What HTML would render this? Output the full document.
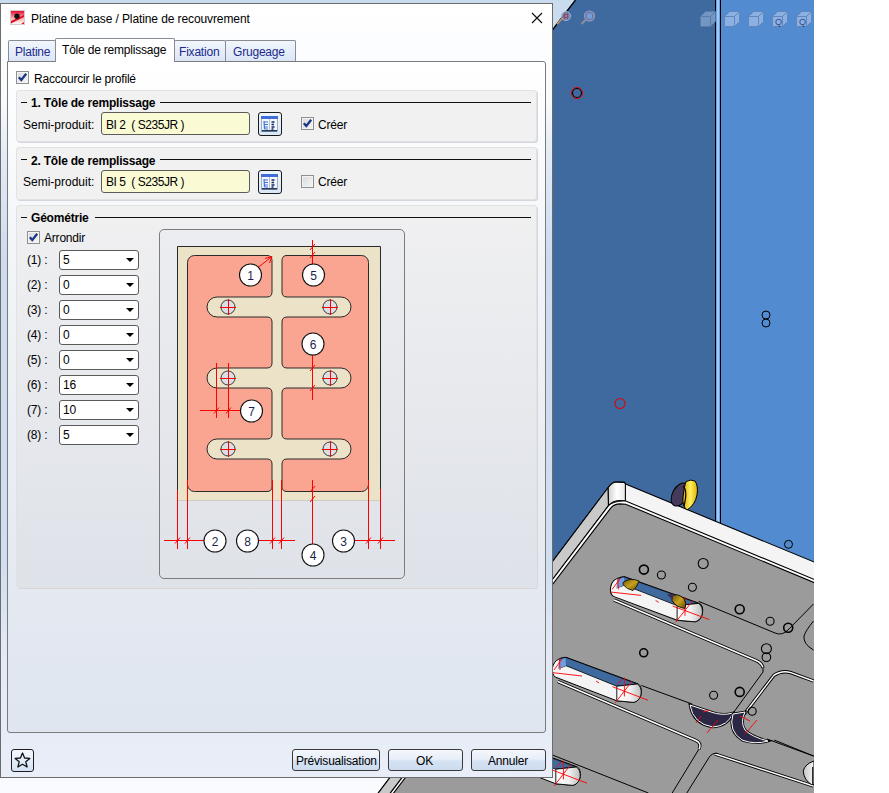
<!DOCTYPE html>
<html><head><meta charset="utf-8">
<style>
html,body{margin:0;padding:0;width:889px;height:793px;overflow:hidden;background:#fff;}
body{position:relative;font-family:"Liberation Sans",sans-serif;font-size:12px;color:#000;}
.a{position:absolute;}
.t{position:absolute;white-space:pre;line-height:14px;font-size:12px;letter-spacing:-0.2px;}
.b{font-weight:bold;}
svg.a{overflow:visible;}
.tab{position:absolute;box-sizing:border-box;border:1px solid #898c95;border-bottom:none;border-radius:2px 2px 0 0;background:linear-gradient(#f2f6fc,#dbe6f7);}
.grp{position:absolute;left:16px;width:521px;box-sizing:border-box;border:1px solid #e2e2e4;border-radius:3px;background:#f1f1f2;box-shadow:1px 1px 0 #d4d6dc;}
.cb{position:absolute;width:13px;height:13px;box-sizing:border-box;border:1px solid #8e8f8f;background:linear-gradient(135deg,#d8d9db,#f7f7f7);box-shadow:inset 0 0 0 1px #f4f4f4;}
.inp{position:absolute;left:101px;width:149px;height:23px;box-sizing:border-box;border:1px solid #5b5b5b;border-radius:3px;background:#fafad5;}
.ibtn{position:absolute;left:258px;width:24px;height:24px;box-sizing:border-box;border:1.5px solid #1a1a1a;border-radius:3px;background:linear-gradient(#eef6fd,#d9e8f6);}
.dd{position:absolute;left:59px;width:80px;height:20px;box-sizing:border-box;border:1px solid #5a5a5a;border-radius:3px;background:#fff;}
.dd i{position:absolute;left:66px;top:7px;width:0;height:0;border-left:4px solid transparent;border-right:4px solid transparent;border-top:4.5px solid #000;}
.btn{position:absolute;top:749px;height:22px;box-sizing:border-box;border:1px solid #3a3a3a;border-radius:3px;background:linear-gradient(#f4f7fc 0%,#e8eff9 45%,#d5e2f3 55%,#cddcf0 100%);}
.ttl{position:absolute;height:1px;background:#111;}
</style></head>
<body>
<svg class="a" style="left:0;top:0" width="889" height="793" viewBox="0 0 889 793">
<!--SCENE-->
<defs>
<linearGradient id="bg" x1="0" y1="0" x2="0" y2="1"><stop offset="0" stop-color="#c9dbee"/><stop offset="0.6" stop-color="#eef3fa"/><stop offset="1" stop-color="#fafbfe"/></linearGradient>
<linearGradient id="corner" x1="0" y1="0" x2="1" y2="0"><stop offset="0" stop-color="#d0d0d0"/><stop offset="0.5" stop-color="#ffffff"/><stop offset="1" stop-color="#e8e8e8"/></linearGradient>
<linearGradient id="cap" x1="0" y1="0" x2="1" y2="0"><stop offset="0" stop-color="#ffffff"/><stop offset="0.55" stop-color="#f0f0f0"/><stop offset="1" stop-color="#bdbdbd"/></linearGradient>
<linearGradient id="cap4" x1="0" y1="0" x2="1" y2="0"><stop offset="0" stop-color="#c8c8c8"/><stop offset="1" stop-color="#f4f4f4"/></linearGradient>
<linearGradient id="gold" x1="0" y1="0" x2="1" y2="1"><stop offset="0" stop-color="#6b5410"/><stop offset="0.5" stop-color="#c9a21c"/><stop offset="1" stop-color="#5a4408"/></linearGradient>
<linearGradient id="yel" x1="0" y1="0" x2="1" y2="0"><stop offset="0" stop-color="#d9a800"/><stop offset="0.5" stop-color="#fff060"/><stop offset="1" stop-color="#e0b000"/></linearGradient>
<linearGradient id="wl" x1="0" y1="0" x2="1" y2="0"><stop offset="0" stop-color="#5c8fd6"/><stop offset="0.5" stop-color="#b4dcff"/><stop offset="1" stop-color="#5c8fd6"/></linearGradient>
</defs>
<rect x="0" y="0" width="814" height="793" fill="url(#bg)"/>
<polygon points="500,98 575,0 715,0 715,700 500,700" fill="#3f6a9f"/>
<line x1="552" y1="30.5" x2="575.5" y2="0" stroke="#000" stroke-width="1.3"/>
<rect x="715" y="0" width="6" height="600" fill="#000"/>
<rect x="716" y="0" width="4" height="600" fill="url(#wl)"/>
<rect x="721" y="0" width="93" height="600" fill="#528bcf"/>
<circle cx="577" cy="93" r="4.5" fill="none" stroke="#000" stroke-width="1.2"/><circle cx="577" cy="93" r="5.6" fill="none" stroke="#e00000" stroke-width="0.9"/>
<circle cx="620" cy="403.5" r="5" fill="none" stroke="#e00000" stroke-width="1.1"/>
<circle cx="766" cy="315" r="4" fill="none" stroke="#000" stroke-width="1"/><circle cx="766" cy="323" r="4" fill="none" stroke="#000" stroke-width="1"/>
<circle cx="788.5" cy="544.3" r="4" fill="none" stroke="#000" stroke-width="1"/>
<g opacity="0.9"><path d="M700.5,16.5 L705.5,11.5 H715.5 V21.5 L710.5,26.5 H700.5 Z" fill="#7a9bc6" stroke="#5d7fae" stroke-width="1"/><path d="M700.5,16.5 H710.5 V26.5 M710.5,16.5 L715.5,11.5" fill="none" stroke="#5d7fae" stroke-width="1"/></g>
<g opacity="1"><path d="M724.5,16.5 L729.5,11.5 H739.5 V21.5 L734.5,26.5 H724.5 Z" fill="#8db0e2" stroke="#5f86bd" stroke-width="1"/><path d="M724.5,16.5 H734.5 V26.5 M734.5,16.5 L739.5,11.5" fill="none" stroke="#5f86bd" stroke-width="1"/></g>
<g opacity="1"><path d="M748.5,16.5 L753.5,11.5 H763.5 V21.5 L758.5,26.5 H748.5 Z" fill="#8db0e2" stroke="#5f86bd" stroke-width="1"/><path d="M748.5,16.5 H758.5 V26.5 M758.5,16.5 L763.5,11.5" fill="none" stroke="#5f86bd" stroke-width="1"/></g>
<g opacity="1"><path d="M772.5,16.5 L777.5,11.5 H787.5 V21.5 L782.5,26.5 H772.5 Z" fill="#8db0e2" stroke="#5f86bd" stroke-width="1"/><path d="M772.5,16.5 H782.5 V26.5 M782.5,16.5 L787.5,11.5" fill="none" stroke="#5f86bd" stroke-width="1"/></g>
<g opacity="1"><path d="M796.5,16.5 L801.5,11.5 H811.5 V21.5 L806.5,26.5 H796.5 Z" fill="#8db0e2" stroke="#5f86bd" stroke-width="1"/><path d="M796.5,16.5 H806.5 V26.5 M806.5,16.5 L811.5,11.5" fill="none" stroke="#5f86bd" stroke-width="1"/></g>
<text x="775" y="25" font-family="Liberation Sans" font-size="9" fill="#2e4e86">Q</text><text x="799" y="25" font-family="Liberation Sans" font-size="9" fill="#2e4e86">Q</text>
<circle cx="589.5" cy="16" r="5" fill="#5a84bc" stroke="#8e9cc0" stroke-width="1.2"/><rect x="586.5" y="13" width="6" height="6" fill="#6fa0dc" stroke="#8a6a8a" stroke-width="0.8"/><line x1="585.5" y1="20" x2="581.5" y2="24" stroke="#8d909c" stroke-width="2"/>
<circle cx="566" cy="16" r="4.6" fill="#7a90b8" stroke="#a9b6d6" stroke-width="1" opacity="0.85"/><path d="M563.5,14.5 H568.5 M563.5,17.5 H568.5 M564.5,13 V19 M567.5,13 V19" stroke="#a04060" stroke-width="1" opacity="0.9"/><line x1="557" y1="24.3" x2="562.5" y2="18" stroke="#d8a070" stroke-width="1.3"/>
<path d="M365.5,810 L608.2,487.5 Q612,482 616.3,482.1 L624.4,482.4 L625.7,484.1 L830,568.6 V810 H370 Z" fill="#f4f4f4" stroke="#000" stroke-width="1.1"/>
<path d="M365.5,810 L608.2,487.5 L608.5,505.7 L377.5,810 Z" fill="#c9c9c9" stroke="#000" stroke-width="1.1"/>
<path d="M608.2,487.5 Q612,482 616.3,482.1 L624.4,482.4 L625.4,484 L625.4,501 Q614,499 608.5,505.7 Z" fill="url(#corner)" stroke="#000" stroke-width="1.1"/>
<path d="M377.5,810 L608.5,505.7 Q613.6,500.5 625.7,501 L830,586 V810 H380 Z" fill="#ffffff" stroke="#000" stroke-width="1.1"/>
<path d="M380.7,810 L610.9,507.8 Q614.5,503.9 620,503.9 L625.7,504.2 L830,589.2 V810 H380 Z" fill="#9b9b9b" stroke="#000" stroke-width="1.1"/>
<ellipse cx="680" cy="494.5" rx="7.5" ry="12.5" transform="rotate(28 680 494.5)" fill="#453a5c" stroke="#000" stroke-width="1"/>
<path d="M686,481.5 Q691,479 695,481 Q698.5,486 697,495 Q695,505 687,510 Q682,506 683,497 Q684,487 686,481.5 Z" fill="url(#yel)" stroke="#000" stroke-width="1"/>
<path d="M683,486 Q688,490 684,506" fill="none" stroke="#000" stroke-width="1.2"/>
<path d="M614,600 L756,660.5 Q762,663 763,668" fill="none" stroke="#000" stroke-width="3.3"/>
<path d="M614,600 L756,660.5 Q762,663 763,668" fill="none" stroke="#fff" stroke-width="1.4"/>
<path d="M763,667 L763,672 L732,714.6" fill="none" stroke="#000" stroke-width="1"/>
<path d="M641.5,685.5 L692,704" fill="none" stroke="#000" stroke-width="1"/>
<path d="M557.8,681.5 L696,740.5 Q702,743.5 699,749" fill="none" stroke="#000" stroke-width="3.3"/>
<path d="M557.8,681.5 L696,740.5 Q702,743.5 699,749" fill="none" stroke="#fff" stroke-width="1.4"/>
<path d="M699,749 L672.2,793" fill="none" stroke="#000" stroke-width="1"/>
<path d="M715,754 L813.4,786" fill="none" stroke="#000" stroke-width="3.3"/>
<path d="M715,754 L813.4,786" fill="none" stroke="#fff" stroke-width="1.4"/>
<path d="M686.8,793 L709,757.5 Q712,752.5 718,753.5" fill="none" stroke="#000" stroke-width="1"/>
<path d="M698.8,601.4 L775,633 Q782,636 788,630 L813.5,604" fill="none" stroke="#000" stroke-width="1"/>
<path d="M813.5,621 Q806,630 804,636 Q803,644 813.5,650" fill="none" stroke="#000" stroke-width="1"/>
<path d="M744.3,714 L773.8,675.4 Q781.7,670 790.8,672.6 L813.5,681" fill="none" stroke="#000" stroke-width="3.3"/>
<path d="M744.3,714 L773.8,675.4 Q781.7,670 790.8,672.6 L813.5,681" fill="none" stroke="#fff" stroke-width="1.4"/>
<path d="M767,739 L813.4,756" fill="none" stroke="#000" stroke-width="1"/>
<path d="M552,754.8 L648.4,793" fill="none" stroke="#000" stroke-width="1"/>
<path d="M774.2,740 L814,756.2" fill="none" stroke="#000" stroke-width="1"/>
<g transform="translate(611.2 591) scale(1.035 1) translate(-553.1 -671.6)"><path d="M555.2,677 C550.5,673.5 551.5,662 559,659 C561,658 563.5,657.3 566,657.3 L638.4,684 C643,687 643,700 634,702.4 L616.8,700.8 Z" fill="#f4f4f4" stroke="#000" stroke-width="1"/><path d="M560,659 C562,657.8 564,657.5 566,657.5 L637.3,684 L616.8,686.2 L566,665.7 L560,668 Z" fill="#3f6a9f" stroke="#000" stroke-width="0.8"/><path d="M559,660 L565.5,658.1 L566,665.7 L558,669 Z" fill="#6f9fe0"/><path d="M616.8,686.2 L637.3,684 C643,687 643,700 634,702.4 L616.8,700.8 Z" fill="url(#cap)" stroke="#000" stroke-width="0.9"/><path d="M554,670 L562,659 M553,672.7 L582,676 M596,681 L599,683 M612.5,686.7 L648,700.2 M559.5,659 L560,670 M615.2,702.9 L631.9,681.3 M617,684.6 L622,679 M624.4,677.5 L624.4,696.4" stroke="#ff0000" stroke-width="0.9" fill="none"/></g>
<g><path d="M555.2,677 C550.5,673.5 551.5,662 559,659 C561,658 563.5,657.3 566,657.3 L638.4,684 C643,687 643,700 634,702.4 L616.8,700.8 Z" fill="#f4f4f4" stroke="#000" stroke-width="1"/><path d="M560,659 C562,657.8 564,657.5 566,657.5 L637.3,684 L616.8,686.2 L566,665.7 L560,668 Z" fill="#3f6a9f" stroke="#000" stroke-width="0.8"/><path d="M559,660 L565.5,658.1 L566,665.7 L558,669 Z" fill="#6f9fe0"/><path d="M616.8,686.2 L637.3,684 C643,687 643,700 634,702.4 L616.8,700.8 Z" fill="url(#cap)" stroke="#000" stroke-width="0.9"/><path d="M554,670 L562,659 M553,672.7 L582,676 M596,681 L599,683 M612.5,686.7 L648,700.2 M559.5,659 L560,670 M615.2,702.9 L631.9,681.3 M617,684.6 L622,679 M624.4,677.5 L624.4,696.4" stroke="#ff0000" stroke-width="0.9" fill="none"/></g>
<g transform="translate(-61 83)"><path d="M555.2,677 C550.5,673.5 551.5,662 559,659 C561,658 563.5,657.3 566,657.3 L638.4,684 C643,687 643,700 634,702.4 L616.8,700.8 Z" fill="#f4f4f4" stroke="#000" stroke-width="1"/><path d="M560,659 C562,657.8 564,657.5 566,657.5 L637.3,684 L616.8,686.2 L566,665.7 L560,668 Z" fill="#3f6a9f" stroke="#000" stroke-width="0.8"/><path d="M559,660 L565.5,658.1 L566,665.7 L558,669 Z" fill="#6f9fe0"/><path d="M616.8,686.2 L637.3,684 C643,687 643,700 634,702.4 L616.8,700.8 Z" fill="url(#cap)" stroke="#000" stroke-width="0.9"/><path d="M554,670 L562,659 M553,672.7 L582,676 M596,681 L599,683 M612.5,686.7 L648,700.2 M559.5,659 L560,670 M615.2,702.9 L631.9,681.3 M617,684.6 L622,679 M624.4,677.5 L624.4,696.4" stroke="#ff0000" stroke-width="0.9" fill="none"/></g>
<path d="M623,582.5 Q630,577 639,581 Q637,587.5 633,590.5 Q627,589.5 623,584.5 Z" fill="url(#gold)" stroke="#000" stroke-width="0.8"/>
<path d="M672,596 Q677,592.5 684,598.5 Q687,603.5 685,608.5 Q676,607.5 672,600.5 Z" fill="url(#gold)" stroke="#000" stroke-width="0.8"/>
<path d="M667,594.5 L674,593.5 L672,599.5 Z" fill="#3a2d55"/>
<path d="M814,761 Q805,764 803.2,771 Q804,780 811.4,784.6 L814,784.6 Z" fill="url(#cap4)" stroke="#000" stroke-width="1"/>
<line x1="812.7" y1="767" x2="812.7" y2="784" stroke="#000" stroke-width="1"/>
<path d="M690,705 Q693,724 713,727 Q728,726 733,713 Q722,716 711,712 Z" fill="#2b2745" stroke="#000" stroke-width="2.6"/>
<path d="M690,705 Q693,724 713,727 Q728,726 733,713 Q722,716 711,712 Z" fill="#2b2745" stroke="#fff" stroke-width="1"/>
<path d="M733,714 Q728,731 742,740 Q755,745 768,741 Q752,737 745,730 Q740,722 745,712 Z" fill="#2b2745" stroke="#000" stroke-width="2.6"/>
<path d="M733,714 Q728,731 742,740 Q755,745 768,741 Q752,737 745,730 Q740,722 745,712 Z" fill="#2b2745" stroke="#fff" stroke-width="1"/>
<circle cx="643.9" cy="569.6" r="4.5" fill="none" stroke="#000" stroke-width="1.6"/>
<circle cx="661.4" cy="575" r="4" fill="none" stroke="#000" stroke-width="1.1"/>
<circle cx="703.2" cy="563.5" r="5" fill="none" stroke="#000" stroke-width="1.1"/>
<circle cx="692.4" cy="587.3" r="4" fill="none" stroke="#000" stroke-width="1.1"/>
<circle cx="739.7" cy="609.2" r="4.5" fill="none" stroke="#000" stroke-width="1.6"/>
<circle cx="770.1" cy="621.2" r="4" fill="none" stroke="#000" stroke-width="1.1"/>
<circle cx="788.2" cy="627.7" r="4.5" fill="none" stroke="#000" stroke-width="1.6"/>
<circle cx="766.4" cy="648.7" r="5" fill="none" stroke="#000" stroke-width="1.1"/>
<circle cx="766.4" cy="657.2" r="4.3" fill="none" stroke="#000" stroke-width="1.1"/>
<circle cx="713.6" cy="695.3" r="4" fill="none" stroke="#000" stroke-width="1.1"/>
<circle cx="739.7" cy="691.9" r="4.5" fill="none" stroke="#000" stroke-width="1.6"/>
<circle cx="752.2" cy="711.2" r="4" fill="none" stroke="#000" stroke-width="1.1"/>
<circle cx="643.7" cy="652.8" r="4" fill="none" stroke="#000" stroke-width="1.6"/>
<path d="M696,723 L701,716 M703,712 L710,710 M707,733 L718,720 M745,734 L757,720 M740,716 L750,721" stroke="#ff0000" stroke-width="0.9" fill="none"/>
<rect x="814" y="0" width="75" height="793" fill="#ffffff"/>

</svg>

<!-- DIALOG -->
<div class="a" style="left:0;top:3px;width:553px;height:775px;box-sizing:border-box;border:1px solid #6c6c6c;background:linear-gradient(#ffffff 0px,#f8fafd 100px,#e3ebf6 150px,#cfdcef 250px,#cfdef1 560px,#e3eaf5 650px,#e9eef8 775px);"></div>
<!-- title -->
<svg class="a" style="left:10px;top:10px" width="15" height="15" viewBox="0 0 15 15">
  <defs><linearGradient id="ig" x1="0" y1="0" x2="0" y2="1"><stop offset="0" stop-color="#e0002a"/><stop offset="0.55" stop-color="#f7b0a8"/><stop offset="1" stop-color="#ffffff"/></linearGradient></defs>
  <rect x="0.5" y="0.5" width="14" height="14" fill="url(#ig)" stroke="#d9c8cc"/>
  <polygon points="1,11 14,5 14,7 1,13.5" fill="#e0102a"/>
  <polygon points="14,12 14,14 11,14" fill="#e0102a"/>
  <circle cx="7" cy="6.2" r="2.7" fill="#111"/>
</svg>
<div class="t" style="left:31px;top:12px;letter-spacing:-0.1px">Platine de base / Platine de recouvrement</div>
<svg class="a" style="left:531px;top:12px" width="12" height="12" viewBox="0 0 12 12"><path d="M1,1 L11,11 M11,1 L1,11" stroke="#111" stroke-width="1.2"/></svg>

<!-- panel -->
<div class="a" style="left:7px;top:61px;width:539px;height:672px;box-sizing:border-box;border:1px solid #7b7b7b;border-radius:0 3px 3px 3px;background:linear-gradient(#ffffff 0px,#fbfcfd 60px,#f0f3f7 240px,#e1e7f0 610px,#e0e6ef 672px);"></div>

<!-- tabs -->
<div class="tab" style="left:8px;top:40px;width:48px;height:21px;"></div>
<div class="t" style="left:15px;top:45px;color:#1b2a8c">Platine</div>
<div class="tab" style="left:174px;top:40px;width:52px;height:21px;"></div>
<div class="t" style="left:179px;top:45px;color:#1b2a8c">Fixation</div>
<div class="tab" style="left:225px;top:40px;width:71px;height:21px;"></div>
<div class="t" style="left:233px;top:45px;color:#1b2a8c">Grugeage</div>
<div class="a" style="left:55px;top:38px;width:120px;height:24px;box-sizing:border-box;border:1px solid #898c95;border-bottom:none;border-radius:2px 2px 0 0;background:#fff;"></div>
<div class="t" style="left:62px;top:43px">Tôle de remplissage</div>

<!-- raccourcir -->
<div class="cb" style="left:16px;top:71px"></div>
<svg class="a" style="left:16px;top:71px" width="13" height="13" viewBox="0 0 13 13"><path d="M2.8,6.3 L5.3,9 L10.2,2.8" stroke="#1c3586" stroke-width="2.3" fill="none"/></svg>
<div class="t" style="left:34px;top:72px">Raccourcir le profilé</div>

<!-- group 1 -->
<div class="grp" style="top:90px;height:52px;"></div>
<div class="ttl" style="left:21px;top:102px;width:6px;"></div>
<div class="t b" style="left:31px;top:96px">1. Tôle de remplissage</div>
<div class="ttl" style="left:160px;top:102px;width:371px;"></div>
<div class="t" style="left:23px;top:118px;letter-spacing:0">Semi-produit:</div>
<div class="inp" style="top:112px;"></div>
<div class="t" style="left:106px;top:118px;letter-spacing:-0.45px">BI 2  ( S235JR )</div>
<div class="ibtn" style="top:112px;"></div>
<svg class="a" style="left:261px;top:116px" width="17" height="16" viewBox="0 0 17 16">
  <rect x="0.5" y="0.5" width="16" height="15" fill="#f4f6fa" stroke="#6f7f99" stroke-width="0.6"/>
  <rect x="0" y="0" width="17" height="3" fill="#3f6fd6"/>
  <rect x="8" y="3" width="1" height="12" fill="#b8c0cc"/>
  <path d="M3,5 L3.5,13 M3,6 H7 M3,8.5 H7 M3,11 H7 M3.5,13 H7" stroke="#3d73e0" stroke-width="1.2"/>
  <path d="M10.5,6 H13.5 M10.5,8.5 H13 M10.5,11 H13.5 M10.5,13 H12.5" stroke="#0d2a6e" stroke-width="1.3"/>
  <rect x="1" y="14" width="15" height="1.5" fill="#283a5c"/>
</svg>
<div class="cb" style="left:301px;top:117px"></div>
<svg class="a" style="left:301px;top:117px" width="13" height="13" viewBox="0 0 13 13"><path d="M2.8,6.3 L5.3,9 L10.2,2.8" stroke="#1c3586" stroke-width="2.3" fill="none"/></svg>
<div class="t" style="left:318px;top:118px">Créer</div>

<!-- group 2 -->
<div class="grp" style="top:147px;height:53px;"></div>
<div class="ttl" style="left:21px;top:159px;width:6px;"></div>
<div class="t b" style="left:31px;top:154px">2. Tôle de remplissage</div>
<div class="ttl" style="left:160px;top:159px;width:371px;"></div>
<div class="t" style="left:23px;top:175px;letter-spacing:0">Semi-produit:</div>
<div class="inp" style="top:170px;"></div>
<div class="t" style="left:106px;top:175px;letter-spacing:-0.45px">BI 5  ( S235JR )</div>
<div class="ibtn" style="top:170px;"></div>
<svg class="a" style="left:261px;top:174px" width="17" height="16" viewBox="0 0 17 16">
  <rect x="0.5" y="0.5" width="16" height="15" fill="#f4f6fa" stroke="#6f7f99" stroke-width="0.6"/>
  <rect x="0" y="0" width="17" height="3" fill="#3f6fd6"/>
  <rect x="8" y="3" width="1" height="12" fill="#b8c0cc"/>
  <path d="M3,5 L3.5,13 M3,6 H7 M3,8.5 H7 M3,11 H7 M3.5,13 H7" stroke="#3d73e0" stroke-width="1.2"/>
  <path d="M10.5,6 H13.5 M10.5,8.5 H13 M10.5,11 H13.5 M10.5,13 H12.5" stroke="#0d2a6e" stroke-width="1.3"/>
  <rect x="1" y="14" width="15" height="1.5" fill="#283a5c"/>
</svg>
<div class="cb" style="left:301px;top:175px"></div>
<div class="t" style="left:318px;top:175px">Créer</div>

<!-- group 3 -->
<div class="grp" style="top:205px;height:383px;background:linear-gradient(#f0f0f1,#dee2e9);"></div>
<div class="ttl" style="left:21px;top:217px;width:6px;"></div>
<div class="t b" style="left:31px;top:211px">Géométrie</div>
<div class="ttl" style="left:95px;top:217px;width:436px;"></div>
<div class="cb" style="left:27px;top:231px"></div>
<svg class="a" style="left:27px;top:231px" width="13" height="13" viewBox="0 0 13 13"><path d="M2.8,6.3 L5.3,9 L10.2,2.8" stroke="#1c3586" stroke-width="2.3" fill="none"/></svg>
<div class="t" style="left:44px;top:231px">Arrondir</div>

<div class="t" style="left:27px;top:253px">(1) :</div><div class="dd" style="top:250px"><i></i></div><div class="t" style="left:63px;top:253px">5</div>
<div class="t" style="left:27px;top:278px">(2) :</div><div class="dd" style="top:275px"><i></i></div><div class="t" style="left:63px;top:278px">0</div>
<div class="t" style="left:27px;top:303px">(3) :</div><div class="dd" style="top:300px"><i></i></div><div class="t" style="left:63px;top:303px">0</div>
<div class="t" style="left:27px;top:328px">(4) :</div><div class="dd" style="top:325px"><i></i></div><div class="t" style="left:63px;top:328px">0</div>
<div class="t" style="left:27px;top:353px">(5) :</div><div class="dd" style="top:350px"><i></i></div><div class="t" style="left:63px;top:353px">0</div>
<div class="t" style="left:27px;top:378px">(6) :</div><div class="dd" style="top:375px"><i></i></div><div class="t" style="left:63px;top:378px">16</div>
<div class="t" style="left:27px;top:403px">(7) :</div><div class="dd" style="top:400px"><i></i></div><div class="t" style="left:63px;top:403px">10</div>
<div class="t" style="left:27px;top:428px">(8) :</div><div class="dd" style="top:425px"><i></i></div><div class="t" style="left:63px;top:428px">5</div>

<!-- diagram frame -->
<div class="a" style="left:159px;top:229px;width:246px;height:350px;box-sizing:border-box;border:1px solid #7c7c7c;border-radius:5px;background:linear-gradient(#ecedf0,#dfe2e8);"></div>
<svg class="a" style="left:0;top:0" width="889" height="793" viewBox="0 0 889 793">
<!--DIAG-->
<rect x="177.5" y="246.5" width="203" height="254" fill="#ebe2c7"/>
<path d="M177.5,500 V246.5 H380.5 V500" fill="none" stroke="#2a2a2a" stroke-width="1"/>
<line x1="177" y1="500.5" x2="381" y2="500.5" stroke="#cfccc3" stroke-width="1"/>
<rect x="187.5" y="255.5" width="181" height="236" rx="7" fill="#f9a592" stroke="#2a2a2a" stroke-width="1"/>
<path d="M267,250 L267,255.5 Q272,255.5 272,260.5 L272,260.5 L272,292 Q272,297 267,297 L217,297 A10,10 0 0 0 217,317 L267,317 Q272,317 272,322 L272,363 Q272,368 267,368 L217,368 A10,10 0 0 0 217,388 L267,388 Q272,388 272,393 L272,434 Q272,439 267,439 L217,439 A10,10 0 0 0 217,459 L267,459 Q272,459 272,464 L272,486.5 Q272,491.5 267,491.5 L267,497 L287,497 L287,491.5 Q282,491.5 282,486.5 L282,486.5 L282,464 Q282,459 287,459 L341,459 A10,10 0 0 0 341,439 L287,439 Q282,439 282,434 L282,393 Q282,388 287,388 L341,388 A10,10 0 0 0 341,368 L287,368 Q282,368 282,363 L282,322 Q282,317 287,317 L341,317 A10,10 0 0 0 341,297 L287,297 Q282,297 282,292 L282,260.5 Q282,255.5 287,255.5 L287,250 Z" fill="#ebe2c7"/>
<path d="M262,255.5 L267,255.5 Q272,255.5 272,260.5 L272,260.5 L272,292 Q272,297 267,297 L217,297 A10,10 0 0 0 217,317 L267,317 Q272,317 272,322 L272,363 Q272,368 267,368 L217,368 A10,10 0 0 0 217,388 L267,388 Q272,388 272,393 L272,434 Q272,439 267,439 L217,439 A10,10 0 0 0 217,459 L267,459 Q272,459 272,464 L272,486.5 Q272,491.5 267,491.5 L262,491.5 M292,255.5 L287,255.5 Q282,255.5 282,260.5 L282,260.5 L282,292 Q282,297 287,297 L341,297 A10,10 0 0 1 341,317 L287,317 Q282,317 282,322 L282,363 Q282,368 287,368 L341,368 A10,10 0 0 1 341,388 L287,388 Q282,388 282,393 L282,434 Q282,439 287,439 L341,439 A10,10 0 0 1 341,459 L287,459 Q282,459 282,464 L282,486.5 Q282,491.5 287,491.5 L292,491.5" fill="none" stroke="#2a2a2a" stroke-width="1"/>
<circle cx="228" cy="307" r="7" fill="#dddde4" stroke="#3a3a3a" stroke-width="1"/>
<path d="M220,307.5 H236 M228.5,299 V315" stroke="#ff0000" stroke-width="1"/>
<circle cx="330" cy="307" r="7" fill="#dddde4" stroke="#3a3a3a" stroke-width="1"/>
<path d="M322,307.5 H338 M330.5,299 V315" stroke="#ff0000" stroke-width="1"/>
<circle cx="228" cy="378" r="7" fill="#dddde4" stroke="#3a3a3a" stroke-width="1"/>
<path d="M220,378.5 H236 M228.5,370 V386" stroke="#ff0000" stroke-width="1"/>
<circle cx="330" cy="378" r="7" fill="#dddde4" stroke="#3a3a3a" stroke-width="1"/>
<path d="M322,378.5 H338 M330.5,370 V386" stroke="#ff0000" stroke-width="1"/>
<circle cx="228" cy="449" r="7" fill="#dddde4" stroke="#3a3a3a" stroke-width="1"/>
<path d="M220,449.5 H236 M228.5,441 V457" stroke="#ff0000" stroke-width="1"/>
<circle cx="330" cy="449" r="7" fill="#dddde4" stroke="#3a3a3a" stroke-width="1"/>
<path d="M322,449.5 H338 M330.5,441 V457" stroke="#ff0000" stroke-width="1"/>
<path d="M258,267.5 L272,256.5 M272,256.5 L265,258.5 M272,256.5 L269.5,263 M312.5,240 L312.5,264 M310.0,250 L315.0,244 M310.0,258 L315.0,252 M312.5,355 L312.5,400 M310.0,371 L315.0,365 M310.0,391 L315.0,385 M216.5,363 L216.5,418 M228.5,363 L228.5,418 M200,410.5 L240.5,410.5 M214.0,413.5 L219.0,407.5 M226.0,413.5 L231.0,407.5 M164,540.5 L204,540.5 M258.5,540.5 L295,540.5 M354.5,540.5 L395,540.5 M177.5,490 L177.5,549 M175.0,543.5 L180.0,537.5 M187.5,480 L187.5,549 M185.0,543.5 L190.0,537.5 M272.5,480 L272.5,549 M270.0,543.5 L275.0,537.5 M281.5,480 L281.5,549 M279.0,543.5 L284.0,537.5 M368.5,480 L368.5,549 M366.0,543.5 L371.0,537.5 M380.5,489 L380.5,549 M378.0,543.5 L383.0,537.5 M312.5,480 L312.5,544 M310.0,492 L315.0,486 M310.0,502 L315.0,496" stroke="#ff0000" stroke-width="1" fill="none"/>
<circle cx="250.5" cy="275" r="11" fill="#fff" stroke="#111" stroke-width="1.1"/>
<text x="250.5" y="279.5" text-anchor="middle" font-family="Liberation Sans" font-size="12" fill="#1a1f4a">1</text>
<circle cx="313.5" cy="275" r="11" fill="#fff" stroke="#111" stroke-width="1.1"/>
<text x="313.5" y="279.5" text-anchor="middle" font-family="Liberation Sans" font-size="12" fill="#1a1f4a">5</text>
<circle cx="313" cy="344" r="11" fill="#fff" stroke="#111" stroke-width="1.1"/>
<text x="313" y="348.5" text-anchor="middle" font-family="Liberation Sans" font-size="12" fill="#1a1f4a">6</text>
<circle cx="251.5" cy="411" r="11" fill="#fff" stroke="#111" stroke-width="1.1"/>
<text x="251.5" y="415.5" text-anchor="middle" font-family="Liberation Sans" font-size="12" fill="#1a1f4a">7</text>
<circle cx="215" cy="541" r="11" fill="#fff" stroke="#111" stroke-width="1.1"/>
<text x="215" y="545.5" text-anchor="middle" font-family="Liberation Sans" font-size="12" fill="#1a1f4a">2</text>
<circle cx="247.5" cy="541" r="11" fill="#fff" stroke="#111" stroke-width="1.1"/>
<text x="247.5" y="545.5" text-anchor="middle" font-family="Liberation Sans" font-size="12" fill="#1a1f4a">8</text>
<circle cx="313" cy="555" r="11" fill="#fff" stroke="#111" stroke-width="1.1"/>
<text x="313" y="559.5" text-anchor="middle" font-family="Liberation Sans" font-size="12" fill="#1a1f4a">4</text>
<circle cx="343.5" cy="541" r="11" fill="#fff" stroke="#111" stroke-width="1.1"/>
<text x="343.5" y="545.5" text-anchor="middle" font-family="Liberation Sans" font-size="12" fill="#1a1f4a">3</text>

<!--/DIAG-->
</svg>

<!-- bottom buttons -->
<div class="btn" style="left:11px;width:23px;height:23px;border-color:#1e1e1e;background:linear-gradient(#f4f8fd,#d3e3f6);"></div>
<svg class="a" style="left:13px;top:751px" width="19" height="18" viewBox="0 0 19 18"><polygon points="9.5,2 11.6,7 16.8,7.4 12.8,10.8 14.1,16 9.5,13.2 4.9,16 6.2,10.8 2.2,7.4 7.4,7" fill="none" stroke="#111" stroke-width="1.3" stroke-linejoin="round"/></svg>
<div class="btn" style="left:292px;width:88px;"></div>
<div class="t" style="left:296px;top:754px">Prévisualisation</div>
<div class="btn" style="left:388px;width:75px;"></div>
<div class="t" style="left:416px;top:754px">OK</div>
<div class="btn" style="left:471px;width:75px;"></div>
<div class="t" style="left:488px;top:754px">Annuler</div>
</body></html>
